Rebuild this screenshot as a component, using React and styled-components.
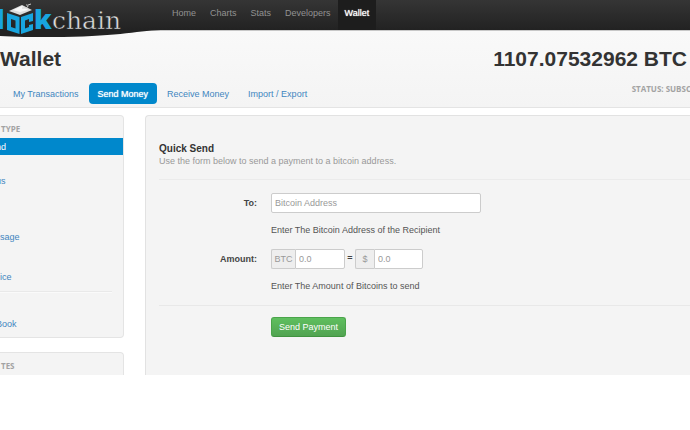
import React from "react";
import styled, { createGlobalStyle, css } from "styled-components";

const Global = createGlobalStyle`
  * { box-sizing: border-box; }
  body {
    margin: 0;
    background: #fff;
    color: #555;
    font: 9px/12px "Liberation Sans", Arial, sans-serif;
  }
  h1, h2, p { margin: 0; }
  button, input { font: inherit; }
`;

const Page = styled.div`
  overflow: hidden;
`;

const TopBar = styled.header`
  display: flex;
  height: 30px;
  background: linear-gradient(#353535, #222);
`;

const Brand = styled.a`
  position: relative;
  z-index: 1;
  flex: 0 0 165px;
  height: 39px;
  svg { display: block; }
`;

const MainNav = styled.nav`
  display: flex;
`;

const NavLink = styled.a`
  padding: 7px;
  height: 30px;
  color: #929292;
  text-decoration: none;
  ${(p) => p.$active && css`
    background: #1d1d1d;
    color: #fff;
    text-shadow: 0 0 1px #fff;
  `}
`;

const Masthead = styled.section`
  border-top: 1px solid #c8c8c8;
  border-bottom: 1px solid #e4e4e4;
  background: linear-gradient(#f9f9f9, #f4f4f4);
  padding: 14px 3px 3px 0;
`;

const TitleRow = styled.div`
  display: flex;
  justify-content: space-between;
`;

const Title = styled.h1`
  color: #333;
  font-size: 21px;
  line-height: 28px;
  white-space: nowrap;
`;

const TabRow = styled.div`
  display: flex;
  justify-content: space-between;
  align-items: flex-start;
  padding-top: 10px;
`;

const Tabs = styled.nav`
  display: flex;
  gap: 1px;
  padding-left: 4px;
`;

const Tab = styled.a`
  padding: 5px 9px 4px;
  border-radius: 4px;
  color: #3f86c0;
  text-decoration: none;
  ${(p) => p.$active && css`
    background: #0088cc;
    color: #fff;
    text-shadow: 0 0 1px #fff;
  `}
`;

const Caption = styled.span`
  color: #a3a3a3;
  font: bold 8px/12px "Open Sans", sans-serif;
`;

const Status = styled(Caption)`
  margin-right: -4px;
  white-space: nowrap;
`;

const Columns = styled.div`
  display: grid;
  grid-template-columns: 124px minmax(0, 1fr);
  gap: 21px;
  padding-top: 7px;
`;

const Aside = styled.aside`
  display: flex;
  flex-direction: column;
  gap: 14px;
`;

const Panel = styled.section`
  border: 1px solid #e4e4e4;
  border-left: 0;
  border-radius: 0 4px 4px 0;
  border-bottom-width: ${(p) => (p.$open ? 0 : 1)}px;
  border-bottom-right-radius: ${(p) => (p.$open ? 0 : 4)}px;
  background: #f4f4f4;
  padding: ${(p) => (p.$open ? "7px 0 2px" : "7px 0 5px")};
`;

const PanelTitle = styled.h2`
  padding-left: 1px;
  line-height: 12px;
  font-size: 8px;
`;

const List = styled.ul`
  margin: 2px 0 0;
  padding: 0;
  list-style: none;
`;

const Item = styled.li`
  margin-top: ${(p) => p.$gap || 0}px;
`;

const ItemLink = styled.a`
  display: block;
  padding: 3px 0 2px;
  text-indent: ${(p) => (p.$cut ? -4 : 0)}px;
  color: ${(p) => (p.$active ? "#fff" : "#3f86c0")};
  background: ${(p) => (p.$active ? "#0088cc" : "transparent")};
  text-decoration: none;
`;

const Divider = styled.hr`
  height: 2px;
  margin: 6px 11px 0 0;
  border: 0;
  border-top: 1px solid #e9e9e9;
  background: #fafafa;
`;

const Main = styled.main`
  border: 1px solid #e2e2e2;
  border-width: 1px 0 0 1px;
  border-radius: 4px 0 0 0;
  background: #f4f4f4;
  padding: 26px 0 37px 13px;
`;

const Heading = styled.h2`
  color: #333;
  font-size: 10px;
  line-height: 13px;
`;

const Hint = styled.p`
  color: #999;
  line-height: 13px;
`;

const Form = styled.form`
  display: grid;
  grid-template-columns: 98px minmax(0, 1fr);
  column-gap: 14px;
  margin-top: 11px;
  border-top: 1px solid #ebebeb;
  padding-top: 13px;
`;

const Label = styled.label`
  padding-top: 4px;
  color: #444;
  font-weight: bold;
  text-align: right;
`;

const TextInput = styled.input`
  display: block;
  width: ${(p) => p.$width}px;
  height: 20px;
  border: 1px solid #ccc;
  border-radius: ${(p) => (p.$joined ? "0 2px 2px 0" : "2px")};
  background: #fff;
  padding: 0 3px;
  color: #555;
  outline: 0;
  &::placeholder { color: #999; opacity: 1; }
`;

const Help = styled.p`
  grid-column: 2;
  padding: 11px 0 13px;
`;

const Amounts = styled.div`
  display: flex;
  gap: 2px;
  color: #444;
`;

const Prepend = styled.div`
  display: flex;
`;

const Unit = styled.span`
  width: ${(p) => p.$width}px;
  height: 20px;
  border: 1px solid #ccc;
  border-right: 0;
  border-radius: 2px 0 0 2px;
  background: #eee;
  padding-top: 3px;
  color: #999;
  text-align: center;
`;

const Equals = styled.span`
  width: 6px;
  padding-top: 3px;
  text-align: center;
  font-weight: bold;
`;

const Actions = styled.div`
  grid-column: 1 / -1;
  border-top: 1px solid #e8e8e8;
  padding: 11px 0 0 112px;
`;

const SendButton = styled.button`
  display: block;
  height: 20px;
  border: 1px solid #4aa44a;
  border-bottom-color: #40933f;
  border-radius: 3px;
  background: linear-gradient(#5fbf5f, #51a351);
  padding: 0 7px;
  color: #fff;
`;

const LogoChain = styled.text`
  font: 25px "DejaVu Serif", serif;
  fill: #dedede;
  stroke: #292929;
  stroke-width: 0.5px;
`;

const LogoBold = styled.text`
  font: 800 27px "Open Sans", sans-serif;
  fill: #18a5df;
`;

function Logo() {
  return (
    <svg width="161" height="39" viewBox="0 0 161 39" role="img" aria-label="Blockchain">
      <defs>
        <linearGradient id="bar" x1="0" y1="0" x2="0" y2="30" gradientUnits="userSpaceOnUse">
          <stop offset="0" stopColor="#353535" />
          <stop offset="1" stopColor="#222" />
        </linearGradient>
      </defs>
      <path d="M0 0H161V30C135 31 115 37 52 37C31 37 15 37 0 36Z" fill="url(#bar)" />
      <LogoBold x="-4" y="29">l</LogoBold>
      <path fillRule="evenodd" fill="#18a5df" d="M7 13L19.500 17V34L7 30ZM11 19V27L15.500 28.500V20.500Z" />
      <path fill="#18a5df" d="M21 17L33 13V21L29 22V19L25 20.500V28.500L29 27V25L33 24V30L21 34Z" />
      <path d="M9 11L22 5L32 10L20 15Z" fill="#ddd" />
      <path d="M13 10L22 6L28 10L20 12Z" fill="#f7f7f7" />
      <path d="M22 8C25 8 28 8 28 6C28 5 27 5 26 5M28 5L31 4" fill="none" stroke="#ccc" />
      <LogoBold x="34" y="29">k</LogoBold>
      <LogoChain x="52" y="29">chain</LogoChain>
    </svg>
  );
}

const navItems = ["Home", "Charts", "Stats", "Developers", "Wallet"];
const tabs = ["My Transactions", "Send Money", "Receive Money", "Import / Export"];

export default function App() {
  return (
    <Page>
      <Global />
      <TopBar>
        <Brand href="#"><Logo /></Brand>
        <MainNav>
          {navItems.map((n) => (
            <NavLink href="#" key={n} $active={n === "Wallet"}>{n}</NavLink>
          ))}
        </MainNav>
      </TopBar>
      <Masthead>
        <TitleRow>
          <Title>Wallet</Title>
          <Title as="div"><strong>1107.07532962 BTC</strong></Title>
        </TitleRow>
        <TabRow>
          <Tabs>
            {tabs.map((t) => <Tab href="#" key={t} $active={t === "Send Money"}>{t}</Tab>)}
          </Tabs>
          <Status>STATUS: SUBSC</Status>
        </TabRow>
      </Masthead>
      <Columns>
        <Aside>
          <Panel>
            <PanelTitle><Caption>TYPE</Caption></PanelTitle>
            <List>
              <Item><ItemLink href="#" $active $cut>nd</ItemLink></Item>
              <Item $gap={17}><ItemLink href="#" $cut>us</ItemLink></Item>
              <Item $gap={39}><ItemLink href="#">sage</ItemLink></Item>
              <Item $gap={23}><ItemLink href="#">ice</ItemLink></Item>
            </List>
            <Divider />
            <List>
              <Item $gap={22}><ItemLink href="#" $cut>Book</ItemLink></Item>
            </List>
          </Panel>
          <Panel $open>
            <PanelTitle><Caption>TES</Caption></PanelTitle>
          </Panel>
        </Aside>
        <Main>
          <Heading>Quick Send</Heading>
          <Hint>Use the form below to send a payment to a bitcoin address.</Hint>
          <Form onSubmit={(e) => e.preventDefault()}>
            <Label htmlFor="to">To:</Label>
            <TextInput id="to" $width={210} placeholder="Bitcoin Address" />
            <Help>Enter The Bitcoin Address of the Recipient</Help>
            <Label htmlFor="btc">Amount:</Label>
            <Amounts>
              <Prepend>
                <Unit $width={24}>BTC</Unit>
                <TextInput id="btc" $width={50} $joined placeholder="0.0" />
              </Prepend>
              <Equals>=</Equals>
              <Prepend>
                <Unit $width={19}>$</Unit>
                <TextInput aria-label="Amount in dollars" $width={49} $joined placeholder="0.0" />
              </Prepend>
            </Amounts>
            <Help>Enter The Amount of Bitcoins to send</Help>
            <Actions><SendButton type="submit">Send Payment</SendButton></Actions>
          </Form>
        </Main>
      </Columns>
    </Page>
  );
}
